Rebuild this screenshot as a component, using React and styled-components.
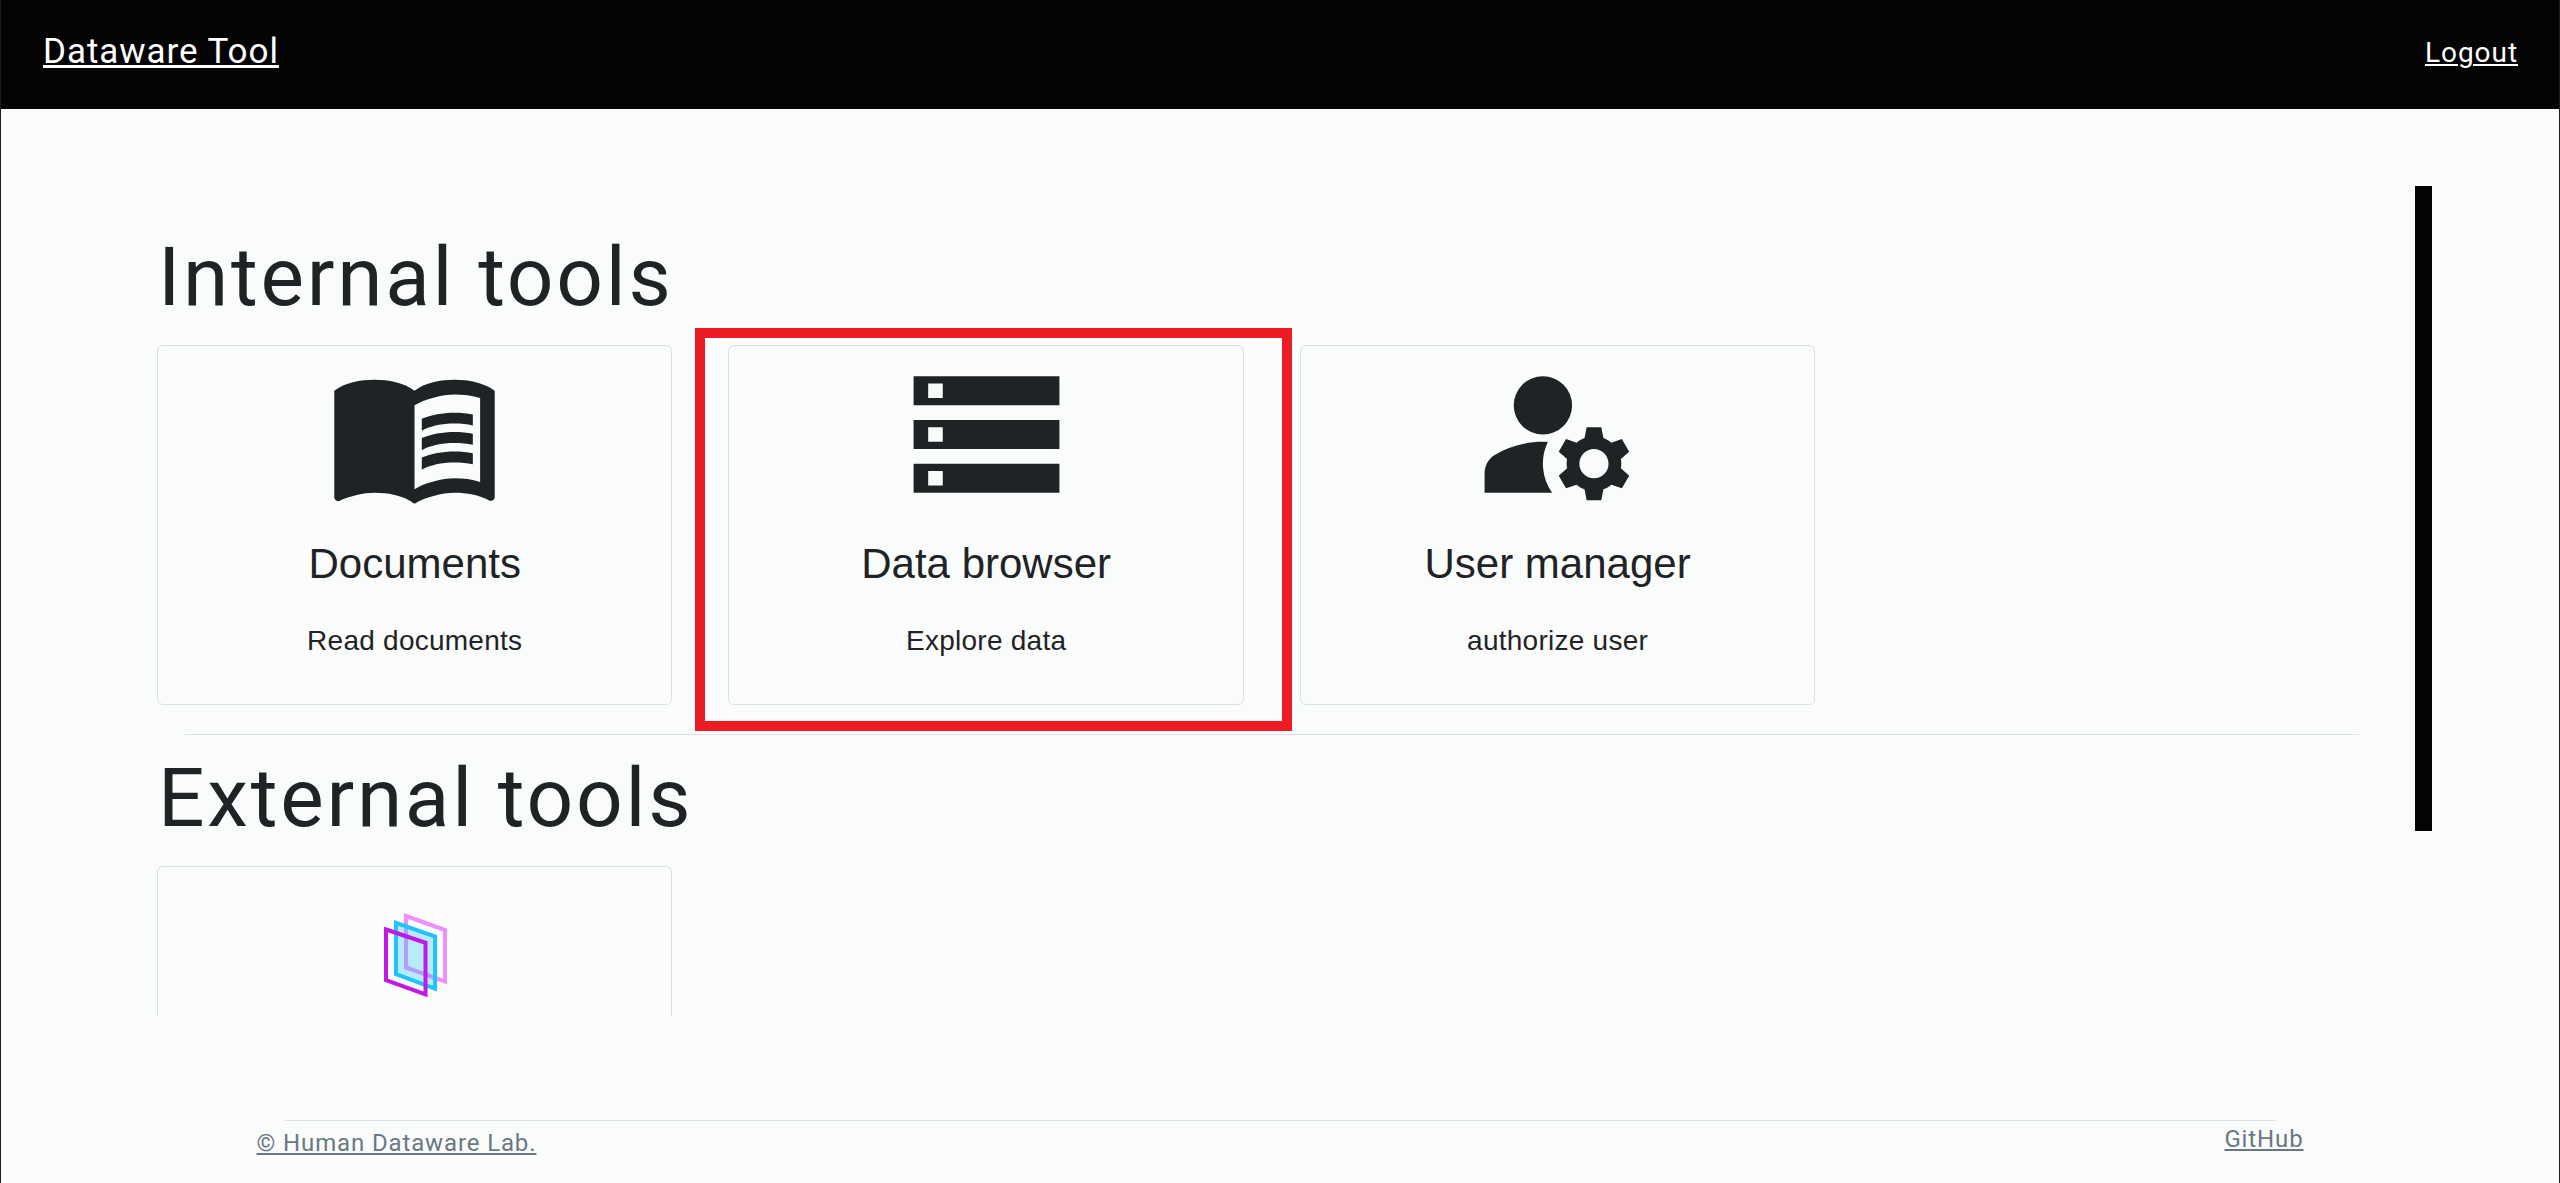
import React from "react";
import styled, { createGlobalStyle } from "styled-components";
import { MdManageAccounts, MdMenuBook, MdStorage } from "react-icons/md";

const GlobalStyle = createGlobalStyle`
  *, *::before, *::after { box-sizing: border-box; }
  body {
    margin: 0;
    background: #fafcfb;
    color: #1f2326;
    font-family: "Liberation Sans", Arial, sans-serif;
  }
`;

const brandFont = `Roboto, "Noto Sans", sans-serif`;

const Page = styled.div`
  display: flex;
  flex-direction: column;
  height: 1183px;
  border: solid #1c1c1c;
  border-width: 0 1px;
  overflow: hidden;
`;

const Header = styled.header`
  display: flex;
  flex: none;
  align-items: flex-start;
  justify-content: space-between;
  height: 109px;
  padding: 31px 41px 0 42px;
  background: #040404;
`;

const TextLink = styled.a`
  font-family: ${brandFont};
  font-size: ${(p) => p.$size}px;
  line-height: ${(p) => p.$line}px;
  letter-spacing: ${(p) => p.$spacing}px;
  margin-top: ${(p) => p.$drop || 0}px;
  color: ${(p) => p.$color};
  text-decoration: underline;
  text-decoration-thickness: ${(p) => p.$thickness || 2}px;
  text-underline-offset: 2px;
  white-space: nowrap;
`;

const ScrollArea = styled.main`
  display: flex;
  flex: none;
  align-items: flex-start;
  width: 2275px;
  height: 830px;
  margin: 77px 0 0 156px;
  overflow: hidden;
`;

const ScrollContent = styled.div`
  flex: 1;
  min-width: 0;
  padding-top: 41px;
`;

const ScrollThumb = styled.div`
  width: 17px;
  height: 645px;
  background: #040404;
`;

const Section = styled.section`
  & + & {
    margin-top: 13px;
  }
`;

const SectionTitle = styled.h1`
  margin: 0 0 18px;
  padding-left: 1px;
  font-family: ${brandFont};
  font-size: 82px;
  font-weight: 400;
  line-height: 100px;
  letter-spacing: 2.7px;
`;

const CardRow = styled.div`
  display: flex;
  gap: 56.05px;
`;

const CardSlot = styled.div`
  position: relative;
  width: 515.4px;
`;

const Highlight = styled.div`
  position: absolute;
  top: -17px;
  left: -33.5px;
  width: 597px;
  height: 403px;
  border: 10px solid #ed1c24;
`;

const Card = styled.article`
  display: flex;
  flex-direction: column;
  align-items: center;
  height: 360px;
  padding-top: 1px;
  border: 1px solid #dde0e0;
  border-radius: 6px;
`;

const IconBox = styled.div`
  display: flex;
  align-items: center;
  justify-content: center;
  height: 175px;
  font-size: 175px;
`;

const CardTitle = styled.h2`
  margin: 17px 0 0;
  font-size: 42px;
  font-weight: 400;
  line-height: 50px;
`;

const CardText = styled.p`
  margin: 31px 0 0;
  font-size: 28px;
  line-height: 42px;
  letter-spacing: 0.25px;
`;

const Divider = styled.hr`
  width: ${(p) => p.$width}px;
  height: 1px;
  margin: ${(p) => p.$margin};
  border: 0;
  background: #dde0e0;
`;

const Footer = styled.footer`
  width: 2047px;
  margin: 104px auto 0;
`;

const FooterLinks = styled.div`
  display: flex;
  align-items: flex-start;
  justify-content: space-between;
`;

const LayersLogo = () => (
  <svg width="80" height="100" viewBox="1 7.5 80 100" fill="none" strokeWidth="4">
    <path d="M32 17.5 71 31.5V83L32 69Z" stroke="#ee8eff" />
    <path d="M22 24.3 61 38V90L22 75.5Z" stroke="#1fc3ff" fill="#1fc3ff" fillOpacity=".3" />
    <path d="M12 31 51.5 44.3V96L12 81.7Z" stroke="#c218e3" />
  </svg>
);

const tools = [
  { title: "Documents", text: "Read documents", icon: <MdMenuBook /> },
  { title: "Data browser", text: "Explore data", icon: <MdStorage />, highlighted: true },
  { title: "User manager", text: "authorize user", icon: <MdManageAccounts /> },
];

export default function App() {
  return (
    <>
      <GlobalStyle />
      <Page>
        <Header>
          <TextLink $size={35} $line={42} $spacing={0.95} $thickness={3} $color="#fff">
            Dataware Tool
          </TextLink>
          <TextLink $size={28} $line={42} $spacing={0.95} $drop={1} $color="#fff">
            Logout
          </TextLink>
        </Header>
        <ScrollArea>
          <ScrollContent>
            <Section>
              <SectionTitle>Internal tools</SectionTitle>
              <CardRow>
                {tools.map((tool) => (
                  <CardSlot key={tool.title}>
                    <Card>
                      <IconBox>{tool.icon}</IconBox>
                      <CardTitle>{tool.title}</CardTitle>
                      <CardText>{tool.text}</CardText>
                    </Card>
                    {tool.highlighted && <Highlight />}
                  </CardSlot>
                ))}
              </CardRow>
              <Divider $width={2174} $margin="29px 0 0 28px" />
            </Section>
            <Section>
              <SectionTitle>External tools</SectionTitle>
              <CardRow>
                <CardSlot>
                  <Card>
                    <IconBox>
                      <LayersLogo />
                    </IconBox>
                  </Card>
                </CardSlot>
              </CardRow>
            </Section>
          </ScrollContent>
          <ScrollThumb />
        </ScrollArea>
        <Footer>
          <Divider $width={1991} $margin="0 auto" />
          <FooterLinks>
            <TextLink $size={24} $line={36} $spacing={0.87} $drop={4} $color="#6a7883">
              © Human Dataware Lab.
            </TextLink>
            <TextLink $size={24} $line={36} $spacing={0.87} $color="#6a7883">
              GitHub
            </TextLink>
          </FooterLinks>
        </Footer>
      </Page>
    </>
  );
}
